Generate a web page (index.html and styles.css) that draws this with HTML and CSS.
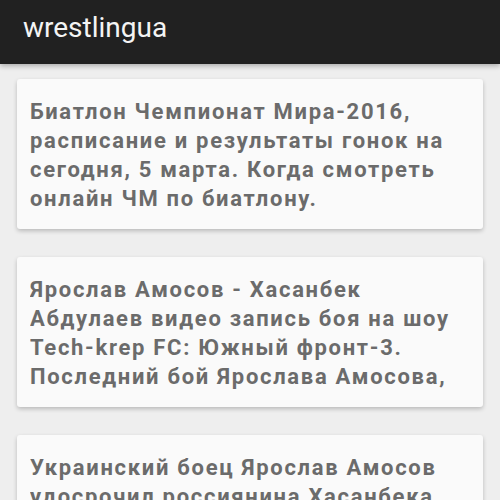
FILE: index.html
```html
<!DOCTYPE html>
<html lang="ru">
<head>
<meta charset="utf-8">
<title>wrestlingua</title>
<link rel="stylesheet" href="styles.css">
</head>
<body>
<header class="appbar">
  <h1 class="appbar-title">wrestlingua</h1>
</header>
<main class="feed">
  <article class="card">
    <p class="card-title">Биатлон Чемпионат Мира-2016, расписание и результаты гонок на сегодня, 5 марта. Когда смотреть онлайн ЧМ по биатлону.</p>
  </article>
  <article class="card">
    <p class="card-title">Ярослав Амосов - Хасанбек<br>Абдулаев видео запись боя на шоу Tech-krep FC: Южный фронт-3. Последний бой Ярослава Амосова, который прошел в Киеве.</p>
  </article>
  <article class="card">
    <p class="card-title">Украинский боец Ярослав Амосов удосрочил россиянина Хасанбека Абдулаева на турнире Tech-krep FC.</p>
  </article>
</main>
</body>
</html>
```
FILE: styles.css
```css
html, body {
  margin: 0;
  padding: 0;
}
body {
  background: #eeeeee;
  font-family: Roboto, "Noto Sans", sans-serif;
  width: 500px;
  height: 500px;
  overflow: hidden;
}
.appbar {
  height: 64px;
  box-sizing: border-box;
  background: #212121;
  padding: 14px 0 0 23px;
  box-shadow: 0 2px 5px rgba(0,0,0,0.28);
  position: relative;
  z-index: 1;
}
.appbar-title {
  margin: 0;
  font-size: 28px;
  font-weight: 400;
  color: #f4f4f4;
  line-height: 28px;
}
.feed {
  display: flex;
  flex-direction: column;
  gap: 28px;
  padding: 15px 17px 0 17px;
}
.card {
  background: #fafafa;
  border-radius: 3px;
  box-shadow: 0 2px 4px rgba(0,0,0,0.22);
  padding: 18px 10px 16px 13px;
  flex-shrink: 0;
}
.card-title {
  margin: 0;
  height: 116px;
  overflow: hidden;
  font-size: 22px;
  font-weight: 700;
  line-height: 29px;
  letter-spacing: 1.7px;
  color: #6b6b6b;
}
```
